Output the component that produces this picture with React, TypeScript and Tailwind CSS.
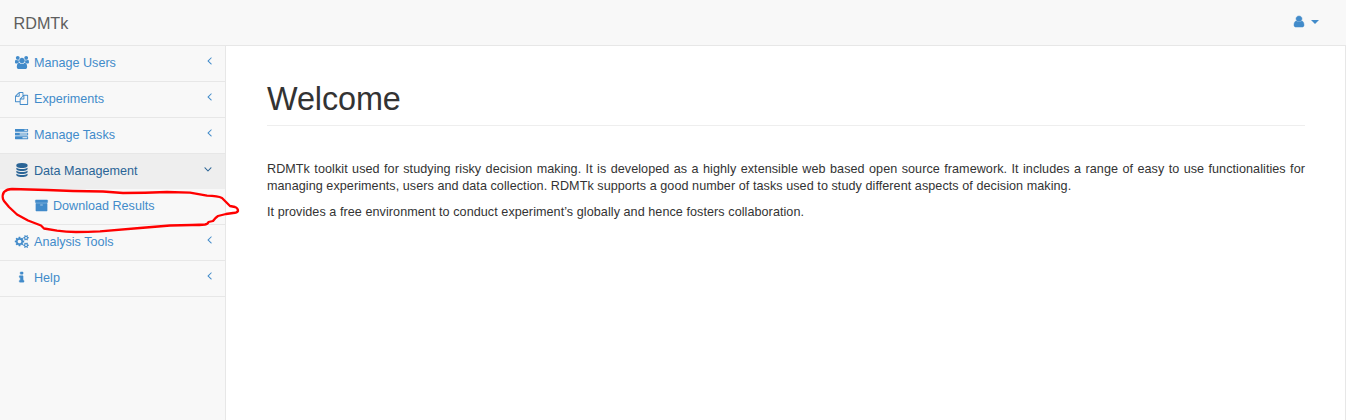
const icons = {
  users: {
    box: '-64 0 2048 1792',
    d: 'M657 896q-162 5-265 128h-134q-82 0-138-40.5t-56-118.5q0-353 124-353 6 0 43.5 21t97.5 42.5 119 21.5q67 0 133-23-5 37-5 66 0 139 81 256zm1071 637q0 120-73 189.5t-194 69.5h-874q-121 0-194-69.5t-73-189.5q0-53 3.5-103.5t14-109 26.5-108.5 43-97.5 62-81 85.5-53.5 111.5-20q10 0 43 21.5t73 48 107 48 135 21.5 135-21.5 107-48 73-48 43-21.5q61 0 111.5 20t85.5 53.5 62 81 43 97.5 26.5 108.5 14 109 3.5 103.5zm-1024-1277q0 106-75 181t-181 75-181-75-75-181 75-181 181-75 181 75 75 181zm704 384q0 159-112.5 271.5t-271.5 112.5-271.5-112.5-112.5-271.5 112.5-271.5 271.5-112.5 271.5 112.5 112.5 271.5zm576 225q0 78-56 118.5t-138 40.5h-134q-103-123-265-128 81-117 81-256 0-29-5-66 66 23 133 23 59 0 119-21.5t97.5-42.5 43.5-21q124 0 124 353zm-128-609q0 106-75 181t-181 75-181-75-75-181 75-181 181-75 181 75 75 181z',
  },
  files: {
    box: '-136 0 2048 1792',
    d: 'M1696 384q40 0 68 28t28 68v1216q0 40-28 68t-68 28h-960q-40 0-68-28t-28-68v-288h-544q-40 0-68-28t-28-68v-672q0-40 20-88t48-76l408-408q28-28 76-48t88-20h416q40 0 68 28t28 68v328q68-40 128-40h416zm-544 213l-299 299h299v-299zm-640-384l-299 299h299v-299zm196 647l316-316v-416h-384v416q0 40-28 68t-68 28h-416v640h512v-256q0-40 20-88t48-76zm956 804v-1152h-384v416q0 40-28 68t-68 28h-416v640h896z',
  },
  tasks: {
    box: '-136 0 2048 1792',
    d: 'M1024 1408h640v-128h-640v128zm-384-512h1024v-128h-1024v128zm640-512h384v-128h-384v128zm512 832v256q0 26-19 45t-45 19h-1664q-26 0-45-19t-19-45v-256q0-26 19-45t45-19h1664q26 0 45 19t19 45zm0-512v256q0 26-19 45t-45 19h-1664q-26 0-45-19t-19-45v-256q0-26 19-45t45-19h1664q26 0 45 19t19 45zm0-512v256q0 26-19 45t-45 19h-1664q-26 0-45-19t-19-45v-256q0-26 19-45t45-19h1664q26 0 45 19t19 45z',
  },
  database: {
    box: '-190 0 2048 1792',
    d: 'M896 768q237 0 443-43t325-127v170q0 69-103 128t-280 93.5-385 34.5-385-34.5-280-93.5-103-128v-170q119 84 325 127t443 43zm0 768q237 0 443-43t325-127v170q0 69-103 128t-280 93.5-385 34.5-385-34.5-280-93.5-103-128v-170q119 84 325 127t443 43zm0-384q237 0 443-43t325-127v170q0 69-103 128t-280 93.5-385 34.5-385-34.5-280-93.5-103-128v-170q119 84 325 127t443 43zm0-1152q208 0 385 34.5t280 93.5 103 128v128q0 69-103 128t-280 93.5-385 34.5-385-34.5-280-93.5-103-128v-128q0-69 103-128t280-93.5 385-34.5z',
  },
  archive: {
    box: '-128 0 2048 1792',
    d: 'M1088 832q0-26-19-45t-45-19h-256q-26 0-45 19t-19 45 19 45 45 19h256q26 0 45-19t19-45zm576-192v960q0 26-19 45t-45 19h-1408q-26 0-45-19t-19-45v-960q0-26 19-45t45-19h1408q26 0 45 19t19 45zm64-448v256q0 26-19 45t-45 19h-1536q-26 0-45-19t-19-45v-256q0-26 19-45t45-19h1536q26 0 45 19t19 45z',
  },
  cogs: {
    box: '-110 0 2048 1792',
    d: 'M896 896q0-106-75-181t-181-75-181 75-75 181 75 181 181 75 181-75 75-181zm768 512q0-52-38-90t-90-38-90 38-38 90q0 53 37.5 90.5t90.5 37.5 90.5-37.5 37.5-90.5zm0-1024q0-52-38-90t-90-38-90 38-38 90q0 53 37.5 90.5t90.5 37.5 90.5-37.5 37.5-90.5zm-384 421v185q0 10-7 19.5t-16 10.5l-155 24q-11 35-32 76 34 48 90 115 7 11 7 20 0 12-7 19-23 30-82.5 89.5t-78.5 59.5q-11 0-21-7l-115-90q-37 19-77 31-11 108-23 155-7 24-30 24h-186q-11 0-20-7.5t-10-17.5l-23-153q-34-10-75-31l-118 89q-7 7-20 7-11 0-21-8-144-133-144-160 0-9 7-19 10-14 41-53t47-61q-23-44-35-82l-152-24q-10-1-17-9.5t-7-19.5v-185q0-10 7-19.5t16-10.5l155-24q11-35 32-76-34-48-90-115-7-11-7-20 0-12 7-20 22-30 82-89t79-59q11 0 21 7l115 90q34-18 77-32 11-108 23-154 7-24 30-24h186q11 0 20 7.5t10 17.5l23 153q34 10 75 31l118-89q8-7 20-7 11 0 21 8 144 133 144 160 0 8-7 19-12 16-42 54t-45 60q23 48 34 82l152 23q10 2 17 10.5t7 19.5zm640 533v140q0 16-149 31-12 27-30 52 51 113 51 138 0 4-4 7-122 71-124 71-8 0-46-47t-52-68q-20 2-30 2t-30-2q-14 21-52 68t-46 47q-2 0-124-71-4-3-4-7 0-25 51-138-18-25-30-52-149-15-149-31v-140q0-16 149-31 13-29 30-52-51-113-51-138 0-4 4-7 4-2 35-20t59-34 30-16q8 0 46 46.5t52 67.5q20-2 30-2t30 2q51-71 92-112l6-2q4 0 124 70 4 3 4 7 0 25-51 138 17 23 30 52 149 15 149 31zm0-1024v140q0 16-149 31-12 27-30 52 51 113 51 138 0 4-4 7-122 71-124 71-8 0-46-47t-52-68q-20 2-30 2t-30-2q-14 21-52 68t-46 47q-2 0-124-71-4-3-4-7 0-25 51-138-18-25-30-52-149-15-149-31v-140q0-16 149-31 13-29 30-52-51-113-51-138 0-4 4-7 4-2 35-20t59-34 30-16q8 0 46 46.5t52 67.5q20-2 30-2t30 2q51-71 92-112l6-2q4 0 124 70 4 3 4 7 0 25-51 138 17 23 30 52 149 15 149 31z',
  },
  info: {
    box: '-150 0 2048 1792',
    d: 'M1216 1344v128q0 26-19 45t-45 19h-512q-26 0-45-19t-19-45v-128q0-26 19-45t45-19h64v-384h-64q-26 0-45-19t-19-45v-128q0-26 19-45t45-19h384q26 0 45 19t19 45v576h64q26 0 45 19t19 45zm-128-1152v192q0 26-19 45t-45 19h-256q-26 0-45-19t-19-45v-192q0-26 19-45t45-19h256q26 0 45 19t19 45z',
  },
  user: {
    box: '-128 0 2048 1792',
    d: 'M1536 1399q0 109-62.5 187t-150.5 78h-854q-88 0-150.5-78t-62.5-187q0-85 8.5-160.5t31.5-152 58.5-131 94-89 134.5-34.5q131 128 313 128t313-128q76 0 134.5 34.5t94 89 58.5 131 31.5 152 8.5 160.5zm-256-887q0 159-112.5 271.5t-271.5 112.5-271.5-112.5-112.5-271.5 112.5-271.5 271.5-112.5 271.5 112.5 112.5 271.5z',
  },
  angle: {
    box: '-128 0 2048 1792',
    d: 'M1203 544q0 13-10 23l-393 393 393 393q10 10 10 23t-10 23l-50 50q-10 10-23 10t-23-10l-466-466q-10-10-10-23t10-23l466-466q10-10 23-10t23 10l50 50q10 10 10 23z',
  },
};

type IconName = keyof typeof icons;

function Icon({ name, className }: { name: IconName; className: string }) {
  const heavy = name === 'info' || name === 'archive' || name === 'user';
  return (
    <svg
      viewBox={icons[name].box}
      preserveAspectRatio="none"
      className={`shrink-0 overflow-visible fill-current ${className}`}
    >
      <path d={icons[name].d} stroke={heavy ? 'currentColor' : 'none'} strokeWidth="60" />
    </svg>
  );
}

function Row({ icon, label, open = false }: { icon: IconName; label: string; open?: boolean }) {
  return (
    <a
      className={`flex items-center pb-px pl-[14px] ${
        open
          ? 'h-[35px] bg-[#eee] pr-[10px] text-[#2a6496]'
          : 'h-9 border-b border-[#e7e7e7] pr-[8px] text-[#428bca]'
      }`}
    >
      <Icon
        name={icon}
        className={open ? 'mb-[2px] mr-[5px] h-[14px] w-[15px]' : 'mb-px mr-[5px] h-[13px] w-[15px]'}
      />
      <span className="grow">{label}</span>
      <Icon
        name="angle"
        className={open ? 'mb-[4px] h-[13px] w-[15px] -rotate-90' : 'mb-[5px] h-[13px] w-[15px]'}
      />
    </a>
  );
}

export default function App() {
  return (
    <div className="relative flex h-[420px] w-[1346px] flex-col overflow-hidden bg-[#f8f8f8] font-['Liberation_Sans',Arial,sans-serif] text-[12.6px] leading-[18px] text-[#333]">
      <header className="flex h-[46px] shrink-0 items-center justify-between border-b border-[#e7e7e7] pl-[13.5px] pr-[27px]">
        <span className="pt-px text-[16.2px] text-[#5e5e5e]">RDMTk</span>
        <span className="flex items-center pb-[2px] text-[#428bca]">
          <Icon name="user" className="h-[13px] w-[16px]" />
          <svg viewBox="0 0 8 4" className="ml-[4px] mt-px h-1 w-2 fill-current">
            <path d="M0 0h8L4 4z" />
          </svg>
        </span>
      </header>
      <div className="flex grow">
        <nav className="w-[225px] shrink-0">
          <Row icon="users" label="Manage Users" />
          <Row icon="files" label="Experiments" />
          <Row icon="tasks" label="Manage Tasks" />
          <Row icon="database" label="Data Management" open />
          <a className="flex h-9 items-center border-b border-[#e7e7e7] pb-px pl-[34px] text-[#428bca]">
            <Icon name="archive" className="mb-px mr-[4px] h-[13px] w-[15px]" />
            Download Results
          </a>
          <Row icon="cogs" label="Analysis Tools" />
          <Row icon="info" label="Help" />
        </nav>
        <main className="w-[1121px] border-x border-[#e7e7e7] bg-white pl-[41px] pr-[40px]">
          <h1 className="mt-[33px] h-[47px] border-b border-[#eee] text-[32.4px] leading-[41px] tracking-[-0.1px]">
            Welcome
          </h1>
          <p className="mt-[35px] text-justify leading-[17px] tracking-[0.062px]">
            RDMTk toolkit used for studying risky decision making. It is developed as a highly extensible web based open
            source framework. It includes a range of easy to use functionalities for managing experiments, users and
            data collection. RDMTk supports a good number of tasks used to study different aspects of decision making.
          </p>
          <p className="mt-[9px] leading-[17px] tracking-[0.062px]">
            It provides a free environment to conduct experiment’s globally and hence fosters collaboration.
          </p>
        </main>
      </div>
      <svg viewBox="0 0 245 240" className="absolute left-0 top-0 h-[240px] w-[245px]" aria-hidden="true">
        <path
          d="M3 199Q2 195 4 192Q7 189 12 189L47 190L73 191L103 191.5L123 193Q145 193 167 192L190 192.7L207 195.7Q218 196 222 198L226 202L230 206L235 207Q238 208 238 211Q237 213 233 213L226 214L218 216Q215 218 213 221L208.5 222Q208 224 205 224.5Q200 225 192 225L170 225.5L140 228L100 231.3Q88 232 76 232Q66 232 57 230.7L44 228.5L41 225.5L28 220.5L17 214.5L9 207L4 201Z"
          fill="none"
          stroke="#f00"
          strokeWidth="2.3"
          strokeLinejoin="round"
        />
      </svg>
    </div>
  );
}
